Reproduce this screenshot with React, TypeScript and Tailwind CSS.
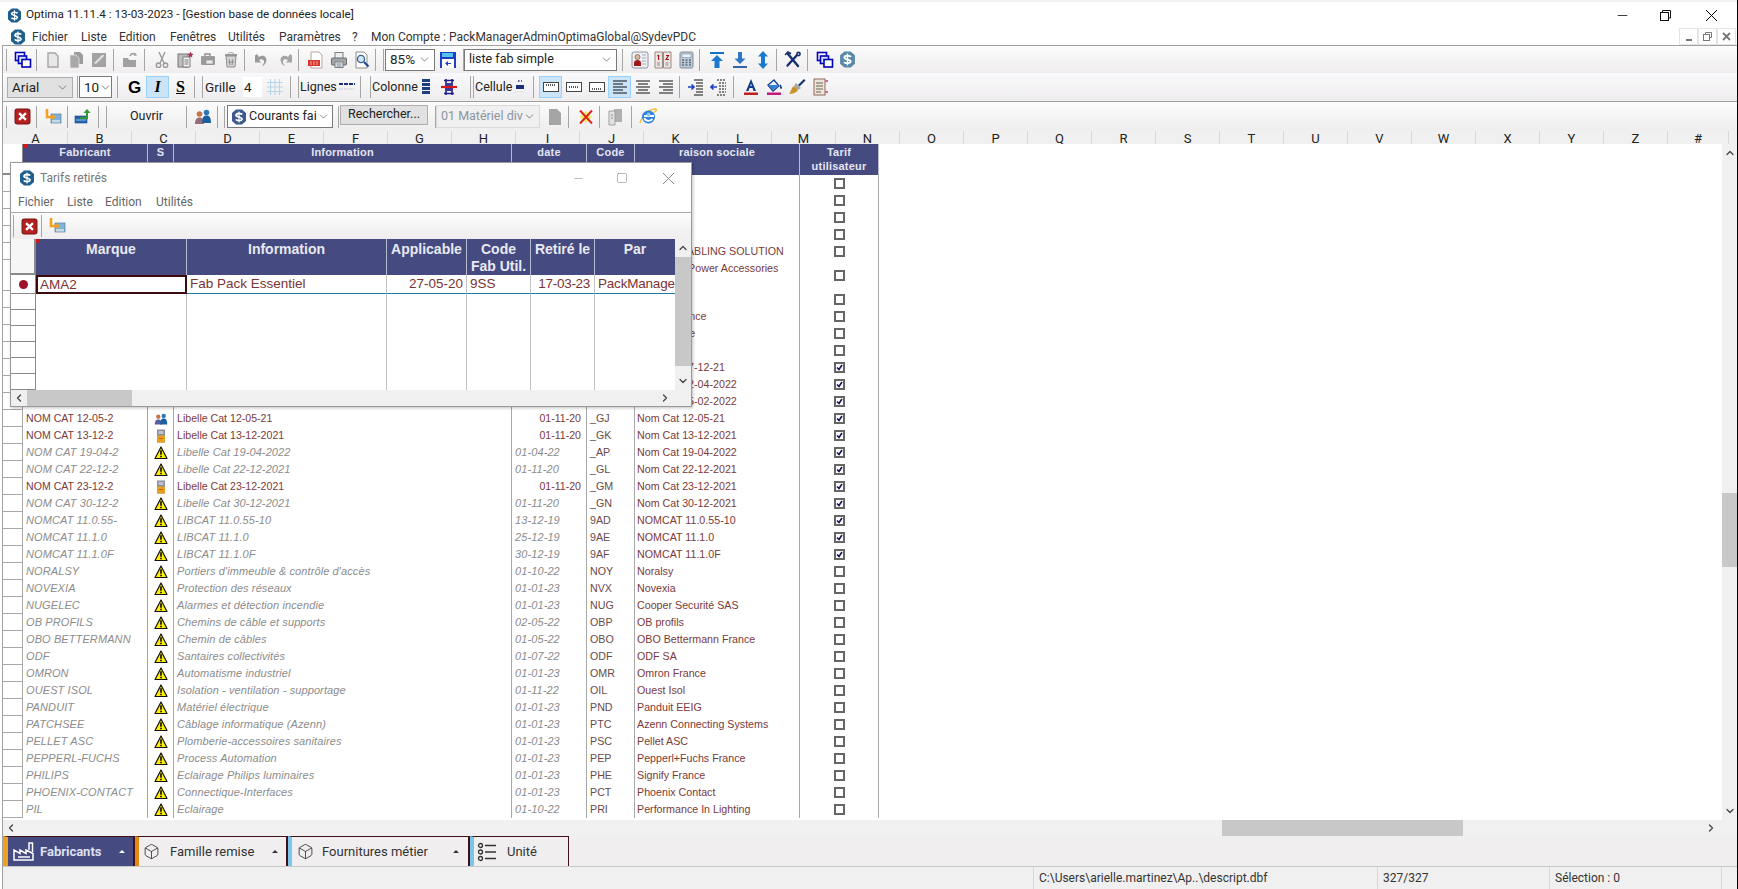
import { Box, ChevronDown, ChevronLeft, ChevronRight, ChevronUp, Minus, Square } from 'lucide-react';
import type { ReactNode, SVGProps } from 'react';

const ui = 'font-["Roboto","Noto_Sans",sans-serif]';
const arial = 'font-["Liberation_Sans",Arial,sans-serif]';

function G({ size = 18, ...p }: SVGProps<SVGSVGElement> & { size?: number }) {
  return <svg width={size} height={size} viewBox="0 0 18 18" fill="none" {...p} />;
}

function Logo({ size = 16, color = '#1f5f8e' }: { size?: number; color?: string }) {
  return (
    <svg width={size} height={size} viewBox="0 0 16 16" className="shrink-0">
      <path d="M5 0.5h6l4 3.500v8l-4 3.500H5L1 12V4z" fill={color} />
      <path d="M11.200 5.600C10.400 4.400 5.600 3.800 5 5.900 4.400 8 11.600 8 11 10.200 10.400 12.200 5.600 11.800 4.800 10.400" stroke="#fff" strokeWidth="1.800" fill="none" />
      <path d="M8 2.400v11.200" stroke="#fff" strokeWidth="1.100" />
    </svg>
  );
}

const Windows = () => (
  <G>
    <rect x="1.500" y="1.500" width="9" height="8" fill="#fff" stroke="#0000b8" strokeWidth="1.600" />
    <rect x="4.500" y="5" width="8" height="7.500" fill="#dbe6ff" stroke="#0000b8" strokeWidth="1.600" />
    <rect x="8" y="8.500" width="8.500" height="7.500" fill="#fff" stroke="#0000b8" strokeWidth="1.600" />
  </G>
);
const DocGrey = () => (
  <G><path d="M4 2h7l3 3v11H4z" fill="#e8e8e8" stroke="#a5a5a5" strokeWidth="1.400" /></G>
);
const CopyGrey = () => (
  <G>
    <path d="M7 1h6l3 3v9H7z" fill="#9d9d9d" />
    <path d="M3 4h6l3 3v10H3z" fill="#a8a8a8" stroke="#eee" strokeWidth=".7" />
  </G>
);
const ImgGrey = () => (
  <G>
    <rect x="2" y="2" width="14" height="14" fill="#a3a3a3" />
    <path d="M4 12l8-8h2v1l-8 8z" fill="#e0e0e0" />
  </G>
);
const FolderGrey = () => (
  <G>
    <path d="M1 7h5l1 2h7v7H1z" fill="#a0a0a0" />
    <path d="M8 5c1-3 5-3 6-1" stroke="#a0a0a0" strokeWidth="1.600" />
    <path d="M13 2l2 2.400-3 .6z" fill="#a0a0a0" />
  </G>
);
const Scissors = () => (
  <G stroke="#9a9a9a" strokeWidth="1.400">
    <path d="M6 1l5 11M12 1L7 12" />
    <circle cx="5.500" cy="14.200" r="2.200" />
    <circle cx="12.500" cy="14.200" r="2.200" />
  </G>
);
const PasteStar = () => (
  <G>
    <rect x="2" y="3" width="10" height="13" fill="#bdbdbd" stroke="#777" />
    <path d="M7 6h7v10H7z" fill="#f4f4f4" stroke="#7a7a7a" />
    <path d="M8.500 9h4M8.500 11h4M8.500 13h4" stroke="#777" />
    <path d="M14.500 0.500l1 2 2 .5-1.500 1.500.3 2-1.800-1-1.800 1 .3-2L11.500 3l2-.5z" fill="#b03060" />
  </G>
);
const CaseGrey = () => (
  <G>
    <path d="M6 5V3h5v2" stroke="#8e8e8e" strokeWidth="1.400" />
    <rect x="2" y="5" width="14" height="9" rx="1" fill="#9c9c9c" />
    <rect x="7" y="9" width="7" height="4" fill="#e8e8e8" stroke="#888" strokeWidth=".6" />
  </G>
);
const Recycle = () => (
  <G>
    <path d="M4 5h10l-1 11H5z" fill="#d4d4d4" stroke="#8f8f8f" />
    <path d="M3 4h12" stroke="#8f8f8f" strokeWidth="1.800" />
    <path d="M7 8l1 6M11 8l-1 6M6 11h6" stroke="#8f8f8f" />
    <path d="M6 3c1-2 5-2 6 0" stroke="#a5a5a5" />
  </G>
);
const Undo = () => (
  <G><path d="M6 6c4-3 9 0 7 5-.6 2-2 3.500-4 4 1.500-2 2.500-3.500 2-5-.7-2-3-2.500-5-1l2 2.500H2V4.500L4 3z" fill="#9a9a9a" /></G>
);
const Redo = () => (
  <G><path d="M12 6C8 3 3 6 5 11c.6 2 2 3.500 4 4-1.500-2-2.500-3.500-2-5 .7-2 3-2.500 5-1l-2 2.500h6V4.500L14 3z" fill="#a5a5a5" /></G>
);
const Pdf = () => (
  <G>
    <path d="M4 1h8l3 3v13H4z" fill="#fff" stroke="#b9a6a0" />
    <rect x="1" y="9" width="12" height="6" fill="#d8342c" />
    <path d="M3 11h8M3 13h8" stroke="#f6b8b2" strokeWidth=".9" strokeDasharray="2 1" />
  </G>
);
const Printer = () => (
  <G>
    <rect x="5" y="1.500" width="8" height="6" fill="#eee" stroke="#7c7c7c" />
    <rect x="1.500" y="7" width="15" height="7" rx="1" fill="#a2a6a8" stroke="#6a6a6a" />
    <rect x="5" y="11" width="8" height="5.500" fill="#f4f4f4" stroke="#7c7c7c" />
    <path d="M6.500 13h5M6.500 15h5" stroke="#5f7f96" />
  </G>
);
const Preview = () => (
  <G>
    <path d="M3 1h8l3 3v13H3z" fill="#fff" stroke="#8d8d8d" />
    <circle cx="8" cy="8" r="3.600" fill="#cfe8f8" stroke="#3a5f8a" strokeWidth="1.300" />
    <path d="M11 11l4.500 4.500" stroke="#1e3f9a" strokeWidth="2" />
  </G>
);
const Save = () => (
  <G>
    <path d="M1 1h16v16H1z" fill="#1e3fc4" />
    <rect x="3" y="2" width="11" height="4" fill="#55c3e8" />
    <rect x="3" y="8" width="12" height="9" fill="#fff" />
    <path d="M6 12.500l3-2.500v5z" fill="#1e3fc4" />
    <path d="M9 12.500h3" stroke="#1e3fc4" />
  </G>
);
const IdCard = () => (
  <G>
    <rect x="1" y="1" width="16" height="16" rx="2" fill="#eef0f3" stroke="#8f96a0" />
    <circle cx="6.500" cy="6" r="2.500" fill="#d9b79a" stroke="#6b4a3a" strokeWidth=".6" />
    <path d="M3 15v-3c0-2 1.500-3 3.500-3S10 10 10 12v3z" fill="#a01818" />
    <path d="M11.500 4h4M11.500 7h4M11.500 10h4M11.500 13h4" stroke="#5e6e80" strokeWidth="1.200" strokeDasharray="1 1" />
  </G>
);
const Book12 = () => (
  <G>
    <path d="M1 1h7.500v16H1zM9.500 1H17v16H9.500z" fill="#efe6e2" stroke="#9a8a8a" />
    <path d="M4.600 4v5M3.500 5l1.100-1M12 4.500h2.500l-2.500 4h3" stroke="#a01010" strokeWidth="1.100" fill="none" />
    <path d="M3 12h3M3 14h3M11.500 12h3M11.500 14h3" stroke="#8a8a8a" />
  </G>
);
const Calc = () => (
  <G>
    <rect x="3" y="1" width="13" height="16" rx="1.500" fill="#bfcbd6" stroke="#7c8c9c" />
    <rect x="5" y="3" width="9" height="3.500" fill="#edf3f8" stroke="#7c8c9c" strokeWidth=".6" />
    <path d="M5 9h2M8.500 9h2M12 9h2M5 11.500h2M8.500 11.500h2M12 11.500h2M5 14h2M8.500 14h2M12 14h2" stroke="#5a6c7e" strokeWidth="1.400" />
  </G>
);
const ArrowTop = () => (
  <G>
    <path d="M2 2h14" stroke="#1670c8" strokeWidth="2" />
    <path d="M9 4l6 6h-3.500v7h-5v-7H3z" fill="#1a78cf" />
  </G>
);
const ArrowBottom = () => (
  <G>
    <path d="M2 16h14" stroke="#3563a8" strokeWidth="2" />
    <path d="M9 13L3.500 7.500H7V1h4v6.500h3.500z" fill="#2f78c8" />
  </G>
);
const ArrowBoth = () => (
  <G><path d="M9 0l5 5.500h-3v7h3L9 18l-5-5.500h3v-7H4z" fill="#1a78cf" /></G>
);
const Tools = () => (
  <G stroke="#14306e" strokeWidth="2.400" strokeLinecap="round">
    <path d="M4 3l10 12M14 3L3.500 14.500" />
    <path d="M1.500 3.500L4 1l2.500 1.500" strokeWidth="1.600" />
    <circle cx="14.500" cy="3" r="1.600" strokeWidth="1.600" fill="#fff" />
  </G>
);
const RedX = ({ size = 17 }: { size?: number }) => (
  <svg width={size} height={size} viewBox="0 0 16 16">
    <rect x="1" y="1" width="14" height="14" rx="2" fill="#b42020" stroke="#7a1010" />
    <path d="M4.800 4.800l6.400 6.400M11.200 4.800l-6.400 6.400" stroke="#fff" strokeWidth="2.200" />
  </svg>
);
const OrangeDoc = () => (
  <G>
    <rect x="7" y="6" width="10" height="9" fill="#7fb2dc" stroke="#5a7f9c" strokeWidth=".7" />
    <rect x="8" y="12" width="8" height="2.500" fill="#c8d8e0" />
    <path d="M3 1v8h8" stroke="#f2a020" strokeWidth="2.600" fill="none" />
    <path d="M8.500 6l3.500 3-3.500 3z" fill="#f2a020" />
  </G>
);
const GreenUp = () => (
  <G>
    <rect x="1" y="8" width="12" height="7" fill="#2462b0" stroke="#1d4a86" strokeWidth=".6" />
    <path d="M2 12h10" stroke="#90c0e8" />
    <path d="M6 9h6V5H9.500l3.500-4 3.500 4H14v6H6z" fill="#2f9a2f" />
  </G>
);
const Users = () => (
  <G>
    <circle cx="5.500" cy="6" r="2.800" fill="#c8744a" />
    <path d="M1 16c0-5 2-6.500 4.500-6.500S10 11 10 16z" fill="#9a6a78" />
    <circle cx="12.500" cy="4.500" r="2.800" fill="#2a78b8" />
    <path d="M8 15c0-6 2-7.500 4.500-7.500S17 9 17 15z" fill="#1c5f9e" />
  </G>
);
const IconX = () => (
  <G>
    <path d="M3 9l6-6 6 6-6 6z" fill="#f6e96a" />
    <path d="M3 2.500l12 13M15 2.500L3 15.500" stroke="#d6281e" strokeWidth="2" />
  </G>
);
const GreyDoor = () => (
  <G>
    <path d="M8 1h8v13H8z" fill="#b0b0b0" />
    <path d="M3 3h6v14H3z" fill="#e2e2e2" stroke="#a0a0a0" />
    <path d="M5 7h2M5 10h2" stroke="#8a8a8a" />
  </G>
);
const Ie = () => (
  <svg width="20" height="20" viewBox="0 0 20 20" fill="none">
    <path d="M2 16C4 8 11 2 18 2c1.500 1-1 3-3 3.500" stroke="#f0c040" strokeWidth="1.400" />
    <circle cx="10.500" cy="10" r="6.500" fill="#2b80e0" />
    <path d="M6 9h10M6.500 11c.5 3 5 4 8 1" stroke="#fff" strokeWidth="1.800" />
    <circle cx="10.500" cy="7.500" r="2" fill="#8cc4f4" />
  </svg>
);
const GridIcon = () => (
  <G stroke="#b8d4ea"><path d="M1 4.500h16M1 9h16M1 13.500h16M4.500 1v16M9 1v16M13.500 1v16" /></G>
);
const Dashes = () => (
  <G><path d="M1 6h16" stroke="#1e2f7a" strokeWidth="2" strokeDasharray="4 1" /><path d="M1 11h16" stroke="#d8d8e4" strokeWidth="1.500" strokeDasharray="4 1" /></G>
);
const ColBars = () => (
  <G><path d="M5 2.500h8M5 6.500h8M5 10.500h8M5 14.500h8" stroke="#1e3f7e" strokeWidth="2.800" /></G>
);
const ColRed = () => (
  <G>
    <path d="M4 2.500h10M4 15.500h10M6 1v16M12 1v16" stroke="#20208a" strokeWidth="1.600" />
    <rect x="5" y="5" width="8" height="8" fill="#3a3aa0" />
    <path d="M1 9h16" stroke="#d81818" strokeWidth="2.200" />
  </G>
);
const Cell = () => (
  <G><path d="M7 3h4" stroke="#1e2f7a" strokeWidth="1.500" strokeDasharray="1.500 1.500" /><rect x="5" y="7" width="8" height="4" fill="#1e2f7a" /><path d="M3 14h12" stroke="#d8d8e4" strokeDasharray="2 1" /></G>
);
const CellBox = ({ y }: { y: number }) => (
  <G>
    <rect x="1.500" y="4.500" width="15" height="9" fill="#fff" stroke="#444" />
    <path d={`M4 ${y}h10`} stroke="#222" strokeDasharray="1 1" strokeWidth="1.400" />
  </G>
);
const Align = ({ d }: { d: string }) => (
  <G stroke="#111"><path d={d} strokeWidth="1.200" /></G>
);
const Indent = ({ flip }: { flip?: boolean }) => (
  <G>
    <path d="M7 2h9M9 5h7M9 8h7M9 11h7M9 14h7M7 17h9" stroke="#111" strokeWidth="1.200" strokeDasharray={flip ? '2 1' : undefined} />
    <path d={flip ? 'M7 9H1M3.500 6.500L1 9l2.500 2.500' : 'M1 9h6M4.500 6.500L7 9l-2.500 2.500'} stroke="#1a40c8" strokeWidth="1.600" />
  </G>
);
const FontA = () => (
  <G>
    <path d="M9 1L4 13h2.500l1-3h3l1 3H14zM8.200 8L9 5.500 9.800 8z" fill="#103a8a" />
    <rect x="2" y="14.500" width="14" height="2.500" fill="#c02020" />
  </G>
);
const Fill = () => (
  <G>
    <path d="M3 7l6-5 5 6-6 5z" fill="#eaf4ff" stroke="#14408a" strokeWidth="1.300" />
    <path d="M3 7h11l-6 5z" fill="#2f80d8" />
    <path d="M15 6c1.500 2 2 3 2 4s-2 1-2 0z" fill="#14408a" />
    <rect x="2" y="14.500" width="14" height="2.500" fill="#c01a80" />
  </G>
);
const Brush = () => (
  <G>
    <path d="M10 7l6-6 1.500 1.500-6 6z" fill="#16306e" />
    <path d="M8 5l5 5-3 2-4-4z" fill="#a8a8a8" />
    <path d="M6 8l4 4c-2 3-6 4-9 4 2-2 2-6 5-8z" fill="#c8922a" />
  </G>
);
const DocPink = () => (
  <G>
    <rect x="3" y="1" width="11" height="16" fill="#efe4d8" stroke="#8a6a5a" />
    <path d="M5 5h7M5 8h7M5 11h7M5 14h5" stroke="#665" />
    <path d="M14 3h3M14 14h3M16 2v2M16 13v2" stroke="#d0308a" />
  </G>
);
const Warn = () => (
  <svg width="14" height="14" viewBox="0 0 14 14">
    <path d="M7 1l6 11.500H1z" fill="#ffee00" stroke="#111" strokeWidth="1.200" strokeLinejoin="round" />
    <path d="M7 4.200v4.500M7 9.800v1.500" stroke="#111" strokeWidth="1.700" />
  </svg>
);
const Battery = () => (
  <svg width="10" height="14" viewBox="0 0 10 14">
    <rect x="1" y="0.500" width="8" height="13" fill="#8a8fa0" />
    <rect x="2.500" y="2" width="5" height="3" fill="#c0c0c8" />
    <rect x="1" y="6.500" width="8" height="7" fill="#e8a020" />
    <path d="M3 9.500h4" stroke="#c06010" />
  </svg>
);
const Factory = () => (
  <svg width="22" height="20" viewBox="0 0 22 20" fill="none" stroke="#fff" strokeWidth="1.500">
    <path d="M1 18V8l6 3.500V8l6 3.500V8l7 3.500V18z" />
    <path d="M16 8V1h3.500v9" />
    <path d="M5 15h12" />
  </svg>
);
const ListIcon = () => (
  <svg width="20" height="20" viewBox="0 0 20 20" fill="none" stroke="#333" strokeWidth="1.300">
    <circle cx="3.500" cy="3.500" r="2" />
    <circle cx="3.500" cy="10" r="2" />
    <circle cx="3.500" cy="16.500" r="2" />
    <path d="M8 3.500h11M8 10h11M8 16.500h11" />
  </svg>
);

function Ic({ children, className = '' }: { children: ReactNode; className?: string }) {
  return <span className={'flex h-[22px] w-[23px] shrink-0 items-center justify-center ' + className}>{children}</span>;
}
function Sep({ className = '' }: { className?: string }) {
  return <span className={'h-[22px] w-px shrink-0 bg-[#a6a6a6] ' + className} />;
}
function Combo({ label, className = '', muted }: { label: string; className?: string; muted?: boolean }) {
  return (
    <span className={'flex items-center justify-between overflow-hidden whitespace-nowrap border pl-[4px] pr-[3px] ' + className}>
      <span className={muted ? 'text-[#8d94a0]' : ''}>{label}</span>
      <ChevronDown size={13} strokeWidth={1.3} className="shrink-0 text-[#555]" />
    </span>
  );
}
const pressed = 'border border-[#99d1ff] bg-[#cce4f7]';

function Toolbar1() {
  return (
    <div className={'flex h-[28px] items-center border-t border-[#a0a0a0] bg-gradient-to-b from-[#fcfcfc] to-[#efedee] text-[13.5px] ' + ui}>
      <Sep className="ml-[3px] mr-[4px]" />
      <Ic><Windows /></Ic>
      <Sep className="ml-[2px] mr-[4px]" />
      <Ic><DocGrey /></Ic><Ic><CopyGrey /></Ic><Ic><ImgGrey /></Ic>
      <Sep className="ml-[3px] mr-[5px]" />
      <Ic><FolderGrey /></Ic>
      <Sep className="ml-[2px] mr-[5px]" />
      <Ic><Scissors /></Ic><Ic><PasteStar /></Ic><Ic><CaseGrey /></Ic><Ic><Recycle /></Ic>
      <Sep className="ml-[2px] mr-[5px]" />
      <Ic><Undo /></Ic><Ic><Redo /></Ic>
      <Sep className="ml-[2px] mr-[5px]" />
      <Ic><Pdf /></Ic><Ic><Printer /></Ic><Ic><Preview /></Ic>
      <Sep className="ml-[2px]" />
      <Sep className="ml-[7px]" />
      <Combo label="85%" className="ml-[1px] h-[22px] w-[50px] border-[#7a7a7a] bg-white" />
      <Ic className="ml-[1px]"><Save /></Ic>
      <Sep className="ml-[4px]" />
      <Combo label="liste fab simple" className="h-[22px] w-[153px] border-[#7a7a7a] bg-white text-[12.5px]" />
      <Sep className="ml-[5px] mr-[5px]" />
      <Ic><IdCard /></Ic><Ic><Book12 /></Ic><Ic><Calc /></Ic>
      <Sep className="ml-[2px] mr-[5px]" />
      <Ic><ArrowTop /></Ic><Ic><ArrowBottom /></Ic><Ic><ArrowBoth /></Ic>
      <Sep className="ml-[2px] mr-[4px]" />
      <Ic><Tools /></Ic>
      <Sep className="ml-[3px] mr-[5px]" />
      <Ic><Windows /></Ic>
      <Ic><Logo size={17} color="#5a8aa8" /></Ic>
    </div>
  );
}

const leftD = 'M2 3h14M2 6h10M2 9h14M2 12h10M2 15h14';
const centerD = 'M2 3h14M4 6h10M2 9h14M4 12h10M2 15h14';
const rightD = 'M2 3h14M6 6h10M2 9h14M6 12h10M2 15h14';

function Toolbar2() {
  return (
    <div className={'flex h-[28px] items-center bg-gradient-to-b from-[#f9f9fb] to-[#efedee] text-[12.5px] text-[#222] ' + ui}>
      <Combo label="Arial" className="ml-[4px] h-[21px] w-[66px] border-[#adadad] bg-[#e1e1e1] text-[13.5px]" />
      <Sep className="ml-[4px]" />
      <Combo label="10" className="ml-[1px] h-[22px] w-[33px] border-[#7a7a7a] bg-white text-[13.5px]" />
      <Sep className="ml-[5px] mr-[5px]" />
      <Ic><span className={'text-[17px] font-black leading-none text-black ' + arial}>G</span></Ic>
      <Ic className={pressed}><span className={'text-[16px] font-bold italic leading-none text-black font-["Liberation_Serif",serif]'}>I</span></Ic>
      <Ic><span className={'text-[16px] font-bold leading-none text-black underline font-["Liberation_Serif",serif]'}>S</span></Ic>
      <Sep className="ml-[2px]" />
      <Sep className="ml-[7px]" />
      <span className="ml-[2px] w-[38px] text-[13.5px]">Grille</span>
      <span className="h-[20px] w-[19px] bg-white pl-[1px] text-[13.5px]">4</span>
      <Ic className="ml-[1px]"><GridIcon /></Ic>
      <Sep className="ml-[4px]" />
      <Sep className="ml-[7px]" />
      <span className="w-[36px] whitespace-nowrap pl-[1px]">Lignes</span>
      <Ic><Dashes /></Ic>
      <Sep className="ml-[2px]" />
      <Sep className="ml-[9px]" />
      <span className="w-[43px] whitespace-nowrap pl-[1px]">Colonne</span>
      <Ic><ColBars /></Ic><Ic><ColRed /></Ic>
      <Sep className="ml-[10px]" />
      <Sep className="ml-[2px]" />
      <span className="w-[34px] whitespace-nowrap pl-[1px]">Cellule</span>
      <Ic><Cell /></Ic>
      <Sep className="ml-[2px] mr-[5px]" />
      <Ic className={pressed}><CellBox y={7} /></Ic>
      <Ic><CellBox y={9} /></Ic>
      <Ic><CellBox y={11} /></Ic>
      <Ic className={pressed}><Align d={leftD} /></Ic>
      <Ic><Align d={centerD} /></Ic>
      <Ic><Align d={rightD} /></Ic>
      <Sep className="ml-[2px] mr-[4px]" />
      <Ic><Indent /></Ic><Ic><Indent flip /></Ic>
      <Sep className="ml-[3px] mr-[5px]" />
      <Ic><FontA /></Ic><Ic><Fill /></Ic><Ic><Brush /></Ic><Ic><DocPink /></Ic>
    </div>
  );
}

function Toolbar3() {
  return (
    <div className={'flex h-[30px] items-center border-t border-[#a0a0a0] bg-gradient-to-b from-[#fcfcfc] to-[#efedee] text-[12.5px] text-[#222] ' + ui}>
      <Sep className="ml-[3px] mr-[4px]" />
      <Ic><RedX /></Ic>
      <Sep className="ml-[2px] mr-[4px]" />
      <Ic><OrangeDoc /></Ic>
      <Sep className="ml-[3px] mr-[3px]" />
      <Ic><GreenUp /></Ic>
      <Sep className="ml-[4px]" />
      <Sep className="ml-[7px]" />
      <span className="w-[79px] text-center">Ouvrir</span>
      <Sep />
      <Ic className="ml-[4px]"><Users /></Ic>
      <Sep className="ml-[3px]" />
      <Sep className="ml-[6px]" />
      <span className="ml-[2px] flex h-[23px] w-[106px] items-center overflow-hidden whitespace-nowrap border border-[#7a7a7a] bg-white pl-[3px] pr-[3px]">
        <Logo size={16} color="#3d5a8e" />
        <span className="ml-[2px]">Courants fai</span>
        <ChevronDown size={13} strokeWidth={1.3} className="ml-auto shrink-0 text-[#555]" />
      </span>
      <Sep className="ml-[5px]" />
      <button className="ml-[1px] mb-[4px] h-[20px] w-[88px] border border-[#adadad] bg-[#e1e1e1] leading-none">Rechercher...</button>
      <Sep className="ml-[7px]" />
      <Combo label="01 Matériel div" muted className="h-[23px] w-[104px] border-[#d9d9d9] bg-[#f0f0f0]" />
      <Ic className="ml-[3px]"><svg width="14" height="18" viewBox="0 0 14 18"><path d="M1 1h8l4 4v12H1z" fill="#a5a5a5" /></svg></Ic>
      <Sep className="ml-[2px] mr-[5px]" />
      <Ic><IconX /></Ic>
      <Sep className="ml-[2px] mr-[3px]" />
      <Ic><GreyDoor /></Ic>
      <Sep className="ml-[5px] mr-[4px]" />
      <Ic><Ie /></Ic>
    </div>
  );
}

const letters = 'ABCDEFGHIJKLMNOPQRSTUVWXYZ#'.split('');

type Row = {
  fab: string;
  icon?: 'warn' | 'users' | 'bat';
  info: string;
  date: string;
  code: string;
  name: string;
  on?: boolean;
  old?: boolean;
  tall?: boolean;
};

const w = (fab: string, info: string, date: string, code: string, name: string, on = false): Row => ({ fab, icon: 'warn', info, date, code, name, on, old: true });

const rows: Row[] = [
  { fab: '', info: '', date: '', code: '', name: '' },
  { fab: '', info: '', date: '', code: '', name: '' },
  { fab: '', info: '', date: '', code: '', name: '' },
  { fab: '', info: '', date: '', code: '', name: '' },
  { fab: '', info: '', date: '', code: '', name: 'ACOME CABLING SOLUTION' },
  { fab: '', info: '', date: '', code: '', name: 'Schneider Power Accessories', tall: true },
  { fab: '', info: '', date: '', code: '', name: '' },
  { fab: '', info: '', date: '', code: '', name: 'Acome France' },
  { fab: '', info: '', date: '', code: '', name: 'Ideal Suisse' },
  { fab: '', info: '', date: '', code: '', name: '' },
  { fab: '', info: '', date: '', code: '', name: 'Nom Cat 07-12-21', on: true },
  { fab: '', info: '', date: '', code: '', name: 'Nom Cat 12-04-2022', on: true },
  { fab: '', info: '', date: '', code: '', name: 'Nom Cat 15-02-2022', on: true },
  { fab: 'NOM CAT 12-05-2', icon: 'users', info: 'Libelle Cat 12-05-21', date: '01-11-20', code: '_GJ', name: 'Nom Cat 12-05-21', on: true },
  { fab: 'NOM CAT 13-12-2', icon: 'bat', info: 'Libelle Cat 13-12-2021', date: '01-11-20', code: '_GK', name: 'Nom Cat 13-12-2021', on: true },
  w('NOM CAT 19-04-2', 'Libelle Cat 19-04-2022', '01-04-22', '_AP', 'Nom Cat 19-04-2022', true),
  w('NOM CAT 22-12-2', 'Libelle Cat 22-12-2021', '01-11-20', '_GL', 'Nom Cat 22-12-2021', true),
  { fab: 'NOM CAT 23-12-2', icon: 'bat', info: 'Libelle Cat 23-12-2021', date: '01-11-20', code: '_GM', name: 'Nom Cat 23-12-2021', on: true },
  w('NOM CAT 30-12-2', 'Libelle Cat 30-12-2021', '01-11-20', '_GN', 'Nom Cat 30-12-2021', true),
  w('NOMCAT 11.0.55-', 'LIBCAT 11.0.55-10', '13-12-19', '9AD', 'NOMCAT 11.0.55-10', true),
  w('NOMCAT 11.1.0', 'LIBCAT 11.1.0', '25-12-19', '9AE', 'NOMCAT 11.1.0', true),
  w('NOMCAT 11.1.0F', 'LIBCAT 11.1.0F', '30-12-19', '9AF', 'NOMCAT 11.1.0F', true),
  w('NORALSY', "Portiers d'immeuble & contrôle d'accès", '01-10-22', 'NOY', 'Noralsy'),
  w('NOVEXIA', 'Protection des réseaux', '01-01-23', 'NVX', 'Novexia'),
  w('NUGELEC', 'Alarmes et détection incendie', '01-01-23', 'NUG', 'Cooper Securité SAS'),
  w('OB PROFILS', 'Chemins de câble et supports', '02-05-22', 'OBP', 'OB profils'),
  w('OBO BETTERMANN', 'Chemin de câbles', '01-05-22', 'OBO', 'OBO Bettermann France'),
  w('ODF', 'Santaires collectivités', '01-07-22', 'ODF', 'ODF SA'),
  w('OMRON', 'Automatisme industriel', '01-01-23', 'OMR', 'Omron France'),
  w('OUEST ISOL', 'Isolation - ventilation - supportage', '01-11-22', 'OIL', 'Ouest Isol'),
  w('PANDUIT', 'Matériel électrique', '01-01-23', 'PND', 'Panduit EEIG'),
  w('PATCHSEE', 'Câblage informatique (Azenn)', '01-01-23', 'PTC', 'Azenn Connecting Systems'),
  w('PELLET ASC', 'Plomberie-accessoires sanitaires', '01-01-23', 'PSC', 'Pellet ASC'),
  w('PEPPERL-FUCHS', 'Process Automation', '01-01-23', 'PEP', 'Pepperl+Fuchs France'),
  w('PHILIPS', 'Eclairage Philips luminaires', '01-01-23', 'PHE', 'Signify France'),
  w('PHOENIX-CONTACT', 'Connectique-Interfaces', '01-01-23', 'PCT', 'Phoenix Contact'),
  w('PIL', 'Eclairage', '01-10-22', 'PRI', 'Performance In Lighting'),
];

const cols = 'grid grid-cols-[20px_125px_26px_338px_75px_48px_165px_79px]';
const cell = 'overflow-hidden whitespace-nowrap border-r border-[#a8a8a8] ';

function Checkbox({ on }: { on?: boolean }) {
  return (
    <span className="flex h-[11px] w-[11px] items-center justify-center border-2 border-[#666] bg-white">
      {on && (
        <svg width="7" height="7" viewBox="0 0 7 7" fill="none"><path d="M1 3.500l2 2 3-4.500" stroke="#10105a" strokeWidth="1.600" /></svg>
      )}
    </span>
  );
}

function MainRow({ r }: { r: Row }) {
  const text = r.old ? 'text-[11px] italic tracking-[0.1px] text-[#8c8c8c]' : 'text-[10.6px] text-[#7b3a3a]';
  return (
    <div className={cols + (r.tall ? ' h-[31px]' : ' h-[17px]')}>
      <div className="border-b border-r border-[#a8a8a8]" />
      <div className={cell + 'pl-[3px] leading-[17px] ' + text}>{r.fab}</div>
      <div className={cell + 'flex items-center justify-center'}>
        {r.icon === 'warn' && <Warn />}
        {r.icon === 'users' && <svg width="14" height="14" viewBox="0 0 18 18"><circle cx="5.500" cy="6" r="2.800" fill="#c8744a" /><path d="M1 16c0-5 2-6.500 4.500-6.500S10 11 10 16z" fill="#5a5fa0" /><circle cx="12.500" cy="5" r="2.800" fill="#2a78b8" /><path d="M8 16c0-6 2-7.500 4.500-7.500S17 10 17 16z" fill="#1c5f9e" /></svg>}
        {r.icon === 'bat' && <Battery />}
      </div>
      <div className={cell + 'pl-[3px] leading-[17px] ' + text}>{r.info}</div>
      <div className={cell + 'leading-[17px] ' + (r.old ? 'pl-[3px] ' + text : 'pr-[5px] text-right ' + text)}>{r.date}</div>
      <div className={cell + 'pl-[3px] text-[10.7px] leading-[17px] text-[#6a4a4a]'}>{r.code}</div>
      <div className={cell + 'pl-[2px] text-[10.7px] leading-[17px] text-[#7b3a3a]'}>{r.name}</div>
      <div className={cell + 'flex items-center justify-center'}><Checkbox on={r.on} /></div>
    </div>
  );
}

function MainHeader() {
  const th = 'flex items-start justify-center border-r border-[#b8bad0] bg-[#454a80] pt-[1px] leading-[14px]';
  return (
    <div className={cols + ' h-[31px] text-[11px] font-bold tracking-[0.2px] text-[#e4e5f0]'}>
      <div className="border-b-2 border-r border-[#8a8a8a] bg-white" />
      <div className={th + ' relative'}>
        <span className="absolute left-0 top-0 h-[4px] w-[4px] bg-[#d01818]" />
        Fabricant
      </div>
      <div className={th}>S</div>
      <div className={th}>Information</div>
      <div className={th}>date</div>
      <div className={th}>Code</div>
      <div className={th}>raison sociale</div>
      <div className={th + ' text-center'}>Tarif<br />utilisateur</div>
    </div>
  );
}

function SmallX({ className = '' }: { className?: string }) {
  return <svg className={className} width="13" height="13" viewBox="0 0 13 13" fill="none" stroke="currentColor"><path d="M1 1l11 11M12 1L1 12" /></svg>;
}

function TarifsDialog() {
  const th = 'border-r border-[#b8bad0] bg-[#454a80] pt-[2px] text-center leading-[17px]';
  const td = 'border-r border-[#c4c4c4]';
  const grid = 'grid grid-cols-[25px_151px_200px_80px_64px_64px_81px]';
  return (
    <div className="absolute left-[7px] top-[117px] flex h-[245px] w-[682px] flex-col border border-[#9a9a9a] bg-white shadow-[1px_1px_3px_rgba(0,0,0,0.25)]">
      <div className={'flex h-[30px] shrink-0 items-center text-[12px] text-[#777] ' + ui}>
        <span className="ml-[8px] mr-[5px]"><Logo size={16} /></span>
        Tarifs retirés
        <Minus size={13} strokeWidth={1} className="ml-auto mr-[31px] text-[#888]" />
        <Square size={12} strokeWidth={1} className="mr-[34px] text-[#777]" />
        <SmallX className="mr-[16px] text-[#888]" />
      </div>
      <div className={'flex h-[20px] shrink-0 items-center border-b border-[#a8a8a8] pb-[1px] text-[12px] text-[#666] ' + ui}>
        <span className="ml-[7px] w-[49px]">Fichier</span>
        <span className="w-[38px]">Liste</span>
        <span className="w-[51px]">Edition</span>
        <span>Utilités</span>
      </div>
      <div className="flex h-[26px] shrink-0 items-center bg-gradient-to-b from-[#fcfcfc] to-[#efedee]">
        <Sep className="ml-[2px] mr-[4px]" />
        <Ic><RedX /></Ic>
        <Sep className="mr-[3px]" />
        <Ic><OrangeDoc /></Ic>
      </div>
      <div className={'flex min-h-0 flex-1 ' + arial}>
        <div className="min-w-0 flex-1">
          <div className={grid + ' h-[36px] text-[14px] font-bold text-[#e8e9f2]'}>
            <div className="border-b-2 border-r-2 border-[#8a8a8a] bg-[#f6f6f6]" />
            <div className={th + ' relative'}>
              <span className="absolute left-0 top-0 h-[4px] w-[4px] bg-[#d01818]" />
              Marque
            </div>
            <div className={th}>Information</div>
            <div className={th}>Applicable</div>
            <div className={th}>Code<br />Fab Util.</div>
            <div className={th}>Retiré le</div>
            <div className={th}>Par</div>
          </div>
          <div className={grid + ' h-[19px] text-[13.5px] leading-[18px] text-[#7a3434]'}>
            <div className="flex items-center justify-center border-b border-r border-[#8a8a8a]">
              <span className="h-[9px] w-[9px] rounded-full bg-[#a01028]" />
            </div>
            <div className="border-2 border-[#3a0a10] pl-[2px] leading-[15px]">AMA2</div>
            <div className={td + ' border-b border-b-[#1a7fa0] pl-[3px]'}>Fab Pack Essentiel</div>
            <div className={td + ' border-b border-b-[#1a7fa0] pr-[3px] text-right'}>27-05-20</div>
            <div className={td + ' border-b border-b-[#1a7fa0] pl-[3px]'}>9SS</div>
            <div className={td + ' border-b border-b-[#1a7fa0] pr-[4px] text-right tracking-[-0.3px]'}>17-03-23</div>
            <div className="overflow-hidden whitespace-nowrap border-b border-b-[#1a7fa0] pl-[3px] tracking-[-0.2px]">PackManage</div>
          </div>
          <div className={grid + ' h-[96px]'}>
            <div className="flex flex-col border-r border-[#8a8a8a]">
              <div className="h-[16px] border-b border-[#8a8a8a]" />
              <div className="h-[16px] border-b border-[#8a8a8a]" />
              <div className="h-[16px] border-b border-[#8a8a8a]" />
              <div className="h-[16px] border-b border-[#8a8a8a]" />
              <div className="h-[16px] border-b border-[#8a8a8a]" />
              <div className="h-[16px] border-b border-[#8a8a8a]" />
            </div>
            <div className={td} /><div className={td} /><div className={td} /><div className={td} /><div className={td} /><div />
          </div>
        </div>
        <div className="flex w-[16px] shrink-0 flex-col items-center bg-[#f0f0f0]">
          <ChevronUp size={12} strokeWidth={2.5} className="my-[3px] text-[#444]" />
          <div className="h-[109px] w-full bg-[#c8c8c8]" />
          <ChevronDown size={12} strokeWidth={2.5} className="mt-auto mb-[3px] text-[#444]" />
        </div>
      </div>
      <div className="flex h-[16px] shrink-0 items-center bg-[#f0f0f0]">
        <ChevronLeft size={12} strokeWidth={2.5} className="mx-[2px] text-[#444]" />
        <div className="h-full w-[105px] bg-[#c8c8c8]" />
        <ChevronRight size={12} strokeWidth={2.5} className="ml-auto mr-[20px] text-[#444]" />
      </div>
    </div>
  );
}

function Tabs() {
  const caret = <span className="h-0 w-0 border-x-[3px] border-b-[3px] border-x-transparent border-b-[#333]" />;
  return (
    <div className={'flex h-[30px] shrink-0 bg-[#f0eeee] text-[13px] text-[#333] ' + ui}>
      <div className="flex w-[132px] items-center border-l-[5px] border-t border-r-2 border-l-[#f0a020] border-t-[#401018] border-r-[#401018] bg-[#454a80] pl-[5px] font-bold text-[#dfe0f0]">
        <Factory />
        <span className="ml-[5px]">Fabricants</span>
        <span className="ml-auto mr-[8px] h-0 w-0 border-x-[3px] border-b-[3px] border-x-transparent border-b-white" />
      </div>
      <div className="flex w-[153px] items-center border-l-[4px] border-t border-r-2 border-l-[#e08a18] border-t-[#401018] border-r-[#401018] pl-[4px]">
        <Box size={17} strokeWidth={1.2} className="text-[#333]" />
        <span className="ml-[10px]">Famille remise</span>
        <span className="ml-auto mr-[8px] flex">{caret}</span>
      </div>
      <div className="flex w-[182px] items-center border-l-[4px] border-t border-r-2 border-l-[#7cc4e8] border-t-[#401018] border-r-[#401018] pl-[5px]">
        <Box size={17} strokeWidth={1.2} className="text-[#333]" />
        <span className="ml-[8px]">Fournitures métier</span>
        <span className="ml-auto mr-[9px] flex">{caret}</span>
      </div>
      <div className="flex w-[99px] items-center border-l-[4px] border-t border-r border-l-[#7cc4e8] border-t-[#401018] border-r-[#401018] pl-[3px]">
        <ListIcon />
        <span className="ml-[10px]">Unité</span>
      </div>
    </div>
  );
}

export default function App() {
  return (
    <div className={'h-[889px] w-[1738px] overflow-hidden border-r border-black bg-white text-[#222] ' + ui}>
      <div className="h-[2px] bg-[#f0f0f0]" />
      <div className="flex h-[26px] items-center text-[11.7px]">
        <span className="ml-[7px] mr-[4px]"><Logo size={15} /></span>
        Optima 11.11.4 : 13-03-2023 - [Gestion base de données locale]
        <Minus size={15} strokeWidth={1.2} className="ml-auto mr-[30px] text-black" />
        <svg width="11" height="11" viewBox="0 0 11 11" fill="none" stroke="#111" className="mr-[34px]"><path d="M2.500 2.500V.5h8v7.500H8.500" /><rect x=".5" y="2.500" width="8" height="8" /></svg>
        <SmallX className="mr-[19px] text-black" />
      </div>
      <div className="flex h-[17px] items-center text-[12px] text-[#333]">
        <span className="ml-[10px] mr-[6px]"><Logo size={16} /></span>
        <span className="w-[49px]">Fichier</span>
        <span className="w-[38px]">Liste</span>
        <span className="w-[51px]">Edition</span>
        <span className="w-[58px]">Fenêtres</span>
        <span className="w-[51px]">Utilités</span>
        <span className="w-[73px]">Paramètres</span>
        <span className="w-[19px]">?</span>
        <span>Mon Compte : PackManagerAdminOptimaGlobal@SydevPDC</span>
        <span className="ml-auto mr-[1px] flex h-[17px]">
          <span className="flex w-[19px] items-end justify-center border border-[#e4e4e4] pb-[3px]"><span className="h-[2px] w-[6px] bg-[#777]" /></span>
          <span className="flex w-[19px] items-center justify-center border border-[#e4e4e4]"><svg width="9" height="9" viewBox="0 0 9 9" fill="none" stroke="#777"><path d="M2.500 2V.5h6v5H7" /><rect x=".5" y="2.500" width="6" height="6" /></svg></span>
          <span className="flex w-[19px] items-center justify-center border border-[#e4e4e4]"><svg width="9" height="9" viewBox="0 0 9 9" fill="none" stroke="#777" strokeWidth="1.800"><path d="M1 1l7 7M8 1L1 8" /></svg></span>
        </span>
      </div>

      <div className="relative ml-[2px] flex h-[844px] flex-col border-l border-[#a0a0a0]">
        <Toolbar1 />
        <Toolbar2 />
        <Toolbar3 />
        <div className="flex h-[13px] shrink-0 overflow-hidden bg-[#f0f0f0] pl-[1px] text-[13px] leading-[15px] text-[#222]">
          {letters.map((l) => (
            <span key={l} className={'shrink-0 border-r border-[#d9d9d9] text-center ' + (l === '#' ? 'w-[61px]' : 'w-[64px]')}>{l}</span>
          ))}
        </div>
        <div className="flex h-[676px] shrink-0">
          <div className={'min-w-0 flex-1 overflow-hidden bg-white text-[11px] ' + arial}>
            <MainHeader />
            {rows.map((r, i) => <MainRow key={i} r={r} />)}
          </div>
          <div className="flex w-[15px] shrink-0 flex-col items-center bg-[#f0f0f0]">
            <ChevronUp size={12} strokeWidth={2.5} className="mt-[3px] text-[#444]" />
            <div className="mt-[334px] h-[74px] w-full bg-[#c8c8c8]" />
            <ChevronDown size={12} strokeWidth={2.5} className="mt-auto mb-[3px] text-[#444]" />
          </div>
        </div>
        <div className="flex h-[16px] shrink-0 items-center bg-[#f0f0f0]">
          <ChevronLeft size={12} strokeWidth={2.5} className="ml-[2px] text-[#444]" />
          <div className="ml-[1205px] h-full w-[241px] bg-[#c8c8c8]" />
          <ChevronRight size={12} strokeWidth={2.5} className="ml-[242px] text-[#444]" />
        </div>
        <Tabs />
        <div className={'flex h-[23px] shrink-0 items-center border-t border-[#c8c8c8] bg-[#f0f0f0] text-[12px] text-[#333] ' + ui}>
          <span className="h-full w-[1031px] border-r border-[#d8d8d8]" />
          <span className="flex h-full w-[344px] items-center border-r border-[#d8d8d8] pl-[5px]">C:\Users\arielle.martinez\Ap..\descript.dbf</span>
          <span className="flex h-full w-[172px] items-center border-r border-[#d8d8d8] pl-[5px]">327/327</span>
          <span className="flex h-full w-[172px] items-center border-r border-[#d8d8d8] pl-[5px]">Sélection : 0</span>
        </div>
        <TarifsDialog />
      </div>
    </div>
  );
}
